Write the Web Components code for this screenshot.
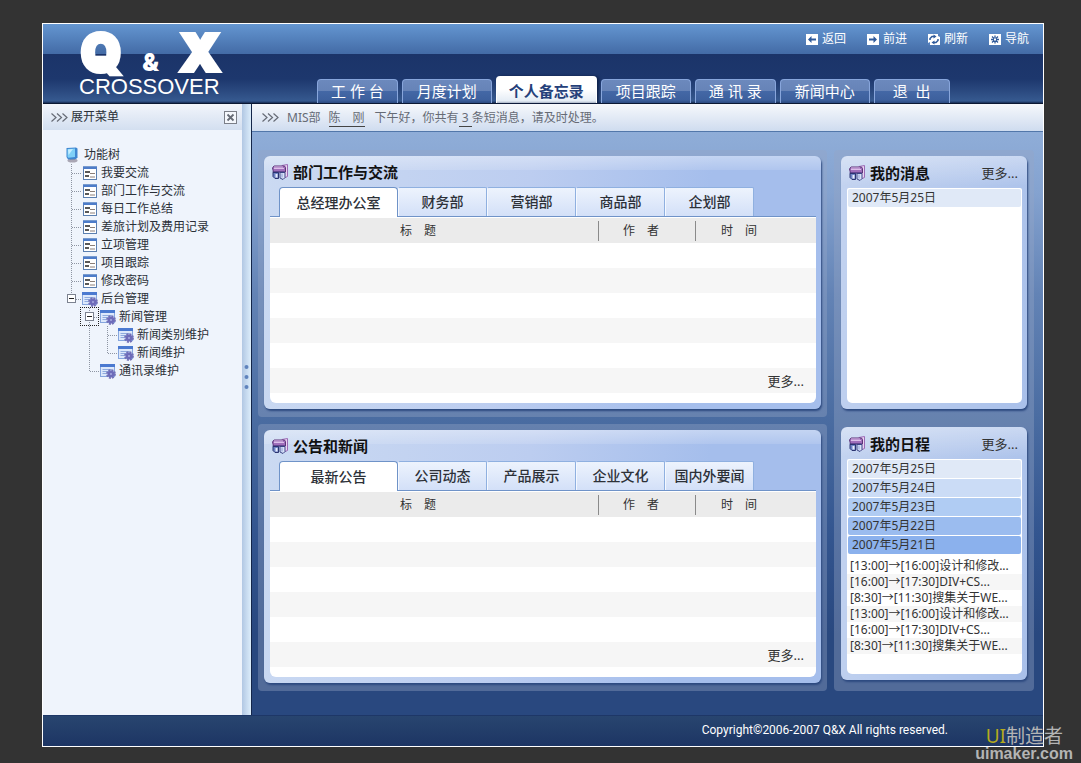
<!DOCTYPE html>
<html lang="zh-CN">
<head>
<meta charset="utf-8">
<meta name="viewport" content="width=device-width, initial-scale=1">
<title>Q&amp;X Crossover</title>
<style>
  html { background: #333; }
  body {
    margin: 0; padding: 23px 37px 16px 42px;
    font: 12px/18px "Noto Sans", "Noto Sans CJK SC", sans-serif;
    color: #333;
  }
</style>
</head>
<body>
<qx-app>
  <qx-header slot="header">
    <qx-logo slot="logo"></qx-logo>
    <qx-tool slot="tools" icon="back">返回</qx-tool>
    <qx-tool slot="tools" icon="forward">前进</qx-tool>
    <qx-tool slot="tools" icon="refresh">刷新</qx-tool>
    <qx-tool slot="tools" icon="guide">导航</qx-tool>
    <qx-nav-tab spaced>工 作 台</qx-nav-tab>
    <qx-nav-tab>月度计划</qx-nav-tab>
    <qx-nav-tab active>个人备忘录</qx-nav-tab>
    <qx-nav-tab>项目跟踪</qx-nav-tab>
    <qx-nav-tab spaced>通 讯 录</qx-nav-tab>
    <qx-nav-tab>新闻中心</qx-nav-tab>
    <qx-nav-tab spaced>退&nbsp; 出</qx-nav-tab>
  </qx-header>

  <qx-sidebar slot="sidebar" heading="展开菜单">
    <qx-tree-item root icon="computer" label="功能树">
      <qx-tree-item icon="page" label="我要交流"></qx-tree-item>
      <qx-tree-item icon="page" label="部门工作与交流"></qx-tree-item>
      <qx-tree-item icon="page" label="每日工作总结"></qx-tree-item>
      <qx-tree-item icon="page" label="差旅计划及费用记录"></qx-tree-item>
      <qx-tree-item icon="page" label="立项管理"></qx-tree-item>
      <qx-tree-item icon="page" label="项目跟踪"></qx-tree-item>
      <qx-tree-item icon="page" label="修改密码"></qx-tree-item>
      <qx-tree-item icon="gear" label="后台管理" last open>
        <qx-tree-item icon="gear" label="新闻管理" open focused>
          <qx-tree-item icon="gear" label="新闻类别维护"></qx-tree-item>
          <qx-tree-item icon="gear" label="新闻维护" last></qx-tree-item>
        </qx-tree-item>
        <qx-tree-item icon="gear" label="通讯录维护" last></qx-tree-item>
      </qx-tree-item>
    </qx-tree-item>
  </qx-sidebar>

  <qx-greeting slot="greeting"></qx-greeting>

  <qx-backing>
    <qx-panel heading="部门工作与交流">
      <qx-tabs>
        <qx-tab active>总经理办公室</qx-tab>
        <qx-tab>财务部</qx-tab>
        <qx-tab>营销部</qx-tab>
        <qx-tab>商品部</qx-tab>
        <qx-tab>企划部</qx-tab>
      </qx-tabs>
      <qx-table></qx-table>
    </qx-panel>
  </qx-backing>
  <qx-backing>
    <qx-panel heading="公告和新闻">
      <qx-tabs>
        <qx-tab active>最新公告</qx-tab>
        <qx-tab>公司动态</qx-tab>
        <qx-tab>产品展示</qx-tab>
        <qx-tab>企业文化</qx-tab>
        <qx-tab>国内外要闻</qx-tab>
      </qx-tabs>
      <qx-table></qx-table>
    </qx-panel>
  </qx-backing>

  <qx-backing slot="aside" side>
    <qx-panel heading="我的消息" more side>
      <qx-day level="1">2007年5月25日</qx-day>
    </qx-panel>
    <qx-panel heading="我的日程" more side>
      <qx-day level="1">2007年5月25日</qx-day>
      <qx-day level="2">2007年5月24日</qx-day>
      <qx-day level="3">2007年5月23日</qx-day>
      <qx-day level="4">2007年5月22日</qx-day>
      <qx-day level="5">2007年5月21日</qx-day>
      <qx-events></qx-events>
    </qx-panel>
  </qx-backing>

  <qx-footer slot="footer">Copyright©2006-2007 Q&amp;X All rights reserved.</qx-footer>
</qx-app>
<qx-watermark></qx-watermark>

<script>
const base = '<style>:host,*,::before,::after{box-sizing:border-box}button{font:inherit;color:inherit;padding:0;margin:0;border:0;background:none}a{color:inherit;text-decoration:none}svg{display:block;flex:none}</style>';

function define(name, render) {
  customElements.define(name, class extends HTMLElement {
    constructor() {
      super();
      this.attachShadow({ mode: 'open' });
    }
    connectedCallback() {
      this.shadowRoot.innerHTML = base + render(this);
    }
  });
}

const chevrons = '<svg width="17" height="9" viewBox="0 0 17 9" fill="none" stroke="#666b75" stroke-width="1.2"><path d="M.5.5l4.500 4-4.500 4M6 .5l4.500 4-4.500 4M11.500.5l4.500 4-4.500 4"/></svg>';

const panelIcon = `<svg width="16" height="16" viewBox="0 0 16 16">
  <path d="M10 3V1.500L15.500.5v12L12 14z" fill="#ecd3f2" stroke="#9a6ab5"/>
  <path d="M.5 4L2 2h10.500l1 1.500v4.500L1.500 8z" fill="#a06fbb" stroke="#5c3578"/>
  <path d="M2 4.500h10M2 3h9" stroke="#dcbfe9"/>
  <path d="M.5 7.500h12v1h-12z" fill="#4a3f88"/>
  <path d="M1 8.500h5.500v6H3L1 12.500z" fill="#6f84c6" stroke="#2b3470"/>
  <path d="M3.500 10h2v3.500h-2z" fill="#e8edfb"/>
  <path d="M8 8.500h5v5l-2 2-3-1.500z" fill="#d9e2f8" stroke="#3b4585"/>
  <path d="M10 9.500v4" stroke="#8d9ed6"/></svg>`;

const toolIcons = {
  back: '<path d="M2 5.500L5.500 2v2.500H10v2H5.500V9z" fill="#2f5a9b"/>',
  forward: '<path d="M10 5.500L6.500 2v2.500H2v2h4.500V9z" fill="#2f5a9b"/>',
  refresh: '<path d="M2 6V4.500L4 2.500h2.500M10 5v1.500L8 8.500H5.500" fill="none" stroke="#2f5a9b" stroke-width="1.500"/><path d="M5.500.5l3 2-3 2zM6.500 6.500l-3 2 3 2z" fill="#2f5a9b"/><path d="M0 9l2-1v3H0zM12 0v3l-2-1V0z" fill="#5580bd"/>',
  guide: '<path d="M6 1.500v8M2 5.500h8M3 2.500l6 6M9 2.500l-6 6" stroke="#2f5a9b" stroke-width="1.300"/><rect x="5" y="4.500" width="2" height="2" fill="#fff"/>'
};

const treeIcons = {
  computer: `<svg width="14" height="16" viewBox="0 0 14 16">
    <ellipse cx="7.500" cy="13.500" rx="5" ry="2" fill="#a9a6b4"/><path d="M5 10h5v3H5z" fill="#8d93a8"/>
    <path d="M1.500 1L11 .5l1.500 1v9L11 12 3 12.500 1.500 10z" fill="#3f86d0"/><path d="M2.500 2l7.500-.5V10l-6.500.8L2.500 10z" fill="#7fd0f7"/>
    <path d="M3 2.500l5-.5-4.500 6z" fill="#c6efff"/></svg>`,
  page: `<svg width="16" height="16" viewBox="0 0 16 16">
    <rect x="1.500" y="2" width="13" height="12.500" fill="#fff" stroke="#5b7fb0"/><path d="M1 1.500h14v2.500H1z" fill="#4d7cc9"/>
    <path d="M3 7h5M3 11h4" stroke="#222" stroke-width="1.400"/><path d="M8 8.500h5M8 12h5" stroke="#8b7f78"/></svg>`,
  gear: `<svg width="16" height="16" viewBox="0 0 16 16">
    <rect x=".5" y="1.500" width="14" height="12" fill="#dce8fb" stroke="#86a6de"/><path d="M0 1h15v3H0z" fill="#4a79d0"/>
    <path d="M2.500 6.500h9M2.500 8.500h7M2.500 10.500h4" stroke="#8fabde"/>
    <circle cx="11" cy="11" r="4" fill="none" stroke="#7472b8" stroke-width="1.800" stroke-dasharray="2 1.140"/>
    <circle cx="11" cy="11" r="3.400" fill="#6e6cba"/><circle cx="11" cy="11" r="1" fill="#a9abe0"/></svg>`
};

define('qx-app', () => `<style>
  :host{display:block;border:1px solid #fff;background:#27467f}
  .body{display:flex;align-items:stretch}
  main{flex:1;min-width:0;border-left:1px solid #14264a;
    background:linear-gradient(#8fadd8 28px,#84a2cf 90px,#6383b5 190px,#4b6da2 310px,#33558f 430px,#29487f 530px)}
  .grid{display:grid;grid-template-columns:minmax(0,1fr) 200px;gap:7px;padding:18px 9px 24px 6px}
  .left{display:grid;gap:7px}
  .aside{display:grid}
  </style>
  <slot name="header"></slot>
  <div class="body"><slot name="sidebar"></slot>
    <main><slot name="greeting"></slot><div class="grid"><div class="left"><slot></slot></div><div class="aside"><slot name="aside"></slot></div></div></main>
  </div>
  <slot name="footer"></slot>`);

define('qx-header', () => `<style>
  :host{display:flex;height:80px;border-bottom:1px solid #0b1833;
    background:linear-gradient(#6496d1,#436ba6 30px,#1b3469 30px,#1d376d 55px,#36598f 77px,#172b52 79px)}
  .brand{width:274px;padding:7px 0 0 36px}
  .right{flex:1;display:flex;flex-direction:column;justify-content:space-between}
  .tools{display:flex;justify-content:flex-end;gap:21px;padding:6px 14px 0 0}
  nav{display:flex;align-items:flex-end;gap:4px}
  </style>
  <div class="brand"><slot name="logo"></slot></div>
  <div class="right"><div class="tools"><slot name="tools"></slot></div><nav><slot></slot></nav></div>`);

define('qx-logo', () => `<style>
  :host{display:block;width:144px;color:#fff}
  .mark{display:flex;justify-content:space-between;align-items:baseline;height:44px;padding:0 3px 0 2px;font:900 51px/44px Inter,sans-serif;-webkit-text-stroke:4px #fff}
  .amp{font-size:24px;-webkit-text-stroke:0}
  .word{font:22px/24px "Liberation Sans",sans-serif}
  </style>
  <div class="mark"><span>Q</span><span class="amp">&amp;</span><span>X</span></div>
  <div class="word">CROSSOVER</div>`);

define('qx-tool', el => `<style>
  :host{display:block;color:#fff}
  a{display:flex;align-items:center;gap:4px}
  </style>
  <a href="#"><svg width="12" height="11" viewBox="0 0 12 11"><rect width="12" height="11" fill="#fff"/>${toolIcons[el.getAttribute('icon')]}</svg><slot></slot></a>`);

define('qx-nav-tab', () => `<style>
  :host{display:block}
  a{display:block;height:24px;min-width:76px;padding:0 14px;text-align:center;white-space:nowrap;
    font-size:15px;line-height:22px;color:#fff;border:1px solid #88a6dc;border-bottom:0;border-radius:4px 4px 0 0;
    background:linear-gradient(#6c89bd,#6683b7 11px,#4468a6 11px,#3d609d 20px,#2b4a80)}
  :host([spaced]) a{padding:0 13px}
  :host([active]) a{height:27px;padding:0 12px;line-height:28px;font-weight:bold;color:#24407a;border-color:#fff;
    background:linear-gradient(#fff 12px,#e4ecf5 24px,#a5b0c2);box-shadow:2px 0 3px #0f2148}
  </style><a href="#"><slot></slot></a>`);

define('qx-sidebar', el => `<style>
  :host{display:flex;width:208px;background:#eff4fc;color:#2b3038}
  .col{flex:1}
  header{display:flex;align-items:center;gap:3px;height:26px;padding:0 5px 0 8px;
    background:linear-gradient(#f2f5fb,#d3dff0)}
  h2{flex:1;margin:0;font:inherit}
  button{display:block}
  .tree{padding:16px 0 0 22px}
  .split{width:9px;padding:260px 0 0 2px;background:linear-gradient(90deg,#b1c7e3,#dcedfb)}
  </style>
  <div class="col"><header>${chevrons}<h2>${el.getAttribute('heading')}</h2>
    <button type="button" aria-label="关闭"><svg width="13" height="13" viewBox="0 0 13 13"><rect x=".5" y=".5" width="12" height="12" fill="#f4f7fc" stroke="#7b7f88"/><path d="M3.500 3.500l6 6M9.500 3.500l-6 6" stroke="#666b75" stroke-width="1.800"/></svg></button></header>
    <div class="tree"><slot></slot></div></div>
  <div class="split"><svg width="5" height="25" viewBox="0 0 5 25" fill="#5f83bd"><circle cx="2.500" cy="3" r="2"/><circle cx="2.500" cy="13" r="2"/><circle cx="2.500" cy="23" r="2"/></svg></div>`);

define('qx-tree-item', el => {
  const root = el.hasAttribute('root');
  const toggle = el.hasAttribute('open')
    ? `<button type="button" aria-expanded="true" aria-label="折叠"><svg width="9" height="9" viewBox="0 0 9 9"><rect x=".5" y=".5" width="8" height="8" fill="#fff" stroke="#7c8290"/><path d="M2 4.500h5" stroke="#222"/></svg></button>` : '';
  return `<style>
  :host{display:block;white-space:nowrap;
    background:repeating-linear-gradient(#8e95a3 0 1px,transparent 1px 2px) 5px 0/1px 100% no-repeat}
  :host([last]){background-size:1px 9px}
  :host([root]){background:none}
  .row{display:flex;align-items:center;height:18px}
  .join{flex:none;width:16px;height:18px;padding:4px 0 0 1px;
    background:repeating-linear-gradient(90deg,#8e95a3 0 1px,transparent 1px 2px) 6px 9px/10px 1px no-repeat}
  button{display:block;width:9px;height:9px}
  :host([focused]) button{outline:1px dotted #222;outline-offset:4px}
  a{display:flex;align-items:center;gap:3px}
  :host([root]) a{gap:5px}
  .kids{padding-left:18px}
  :host([root]) .kids{padding-left:1px}
  </style>
  <div class="row">${root ? '' : `<span class="join">${toggle}</span>`}<a href="#">${treeIcons[el.getAttribute('icon')]}<span>${el.getAttribute('label')}</span></a></div>
  <div class="kids"><slot></slot></div>`;
});

define('qx-greeting', () => `<style>
  :host{display:flex;align-items:center;gap:8px;height:28px;padding:0 10px;color:#666b75;white-space:pre;
    border-bottom:1px solid #5277aa;background:linear-gradient(#f6f8fc,#cfdcef)}
  a{border-bottom:1px solid #444}
  p{margin:0;line-height:16px}
  .who{margin-right:2px}
  </style>${chevrons}<p>MIS部</p><p class="who"><a href="#">陈&emsp;刚</a></p><p>下午好，你共有<a href="#"> 3 </a>条短消息，请及时处理。</p>`);

define('qx-backing', () => `<style>
  :host{display:block;padding:6px 6px 8px;border-radius:4px;background:rgba(150,165,196,.38)}
  :host([side]){display:grid;grid-template-rows:253px 253px;align-content:start;gap:18px;padding:6px 7px}
  </style><slot></slot>`);

define('qx-panel', el => `<style>
  :host{display:flex;flex-direction:column;border-radius:6px;padding:0 5px 6px 6px;box-shadow:1px 2px 2px #2d4a80;
    background:linear-gradient(rgba(255,255,255,.35),rgba(255,255,255,.12) 14px,transparent 14px),
      linear-gradient(100deg,#cbdaf2,#bccdf0 45%,#a5beec 75%)}
  :host([side]){background:linear-gradient(rgba(255,255,255,.35),transparent 30px),linear-gradient(100deg,#c3d3f0,#a9c0ea)}
  header{display:flex;align-items:center;gap:5px;height:31px;padding:1px 4px 0 2px}
  :host([side]) header{height:32px;padding-top:2px}
  header a{font-size:13px}
  h2{flex:1;margin:0;color:#111;font-size:15px;font-weight:bold;line-height:20px}
  .inner{flex:1}
  :host([side]) .inner{background:#fff;border-radius:2px 2px 5px 5px;padding-top:1px}
  </style>
  <header>${panelIcon}<h2>${el.getAttribute('heading')}</h2>${el.hasAttribute('more') ? '<a href="#">更多...</a>' : ''}</header>
  <div class="inner"><slot></slot></div>`);

define('qx-tabs', () => `<style>
  :host{display:flex;height:30px;padding-left:9px;background:linear-gradient(#6f93c8,#6f93c8) 0 29px/100% 1px no-repeat}
  </style><slot></slot>`);

define('qx-tab', () => `<style>
  :host{display:block;width:89px}
  :host([active]){width:119px}
  button{display:block;width:100%;height:29px;font-size:14px;font-weight:500;color:#2d3138;white-space:nowrap;
    border:1px solid #8fb0e0;border-left-color:#f4f8ff;border-bottom:0;border-radius:2px 2px 0 0;
    background:linear-gradient(#edf3fd,#d3e0f8)}
  :host([active]) button{height:30px;border-color:#6f93c8;border-radius:4px 4px 0 0;background:#fff}
  </style><button type="button"><slot></slot></button>`);

define('qx-table', () => `<style>
  :host{display:block;background:#fff;border-radius:0 0 6px 6px;padding:1px 0 10px}
  table{width:100%;border-collapse:collapse;table-layout:fixed}
  th{height:25px;padding:0;font-weight:normal;background:#ebebeb}
  th span{display:block;line-height:20px}
  th+th span{border-left:1px solid #8a8a8a}
  .title{padding-right:32px}
  .author{width:97px}.time{width:121px}
  .author span{padding-right:12px}.time span{padding-right:34px}
  td{height:25px;padding:0 12px;font-size:13px;text-align:right}
  tbody tr:nth-child(even){background:#f6f6f6}
  </style>
  <table><thead><tr><th class="title"><span>标　题</span></th><th class="author"><span>作　者</span></th><th class="time"><span>时　间</span></th></tr></thead>
  <tbody>${'<tr><td colspan="3"></td></tr>'.repeat(5)}<tr><td colspan="3"><a href="#">更多...</a></td></tr></tbody></table>`);

define('qx-day', () => `<style>
  :host{display:block;margin:0 1px 1px;border-radius:2px;line-height:18px;background:#e0e9f7}
  :host([level="2"]){background:#cbdcf6}
  :host([level="3"]){background:#b0ccf3}
  :host([level="4"]){background:#9bbcef}
  :host([level="5"]){background:#8bb1ed}
  a{display:block;padding-left:4px}
  </style><a href="#"><slot></slot></a>`);

define('qx-events', () => `<style>
  :host{display:block}
  ul{list-style:none;margin:0;padding:3px 0 0}
  li{height:16px;padding-left:3px;line-height:16px;white-space:nowrap}
  li:nth-child(even){background:#f6f6f6}
  </style><ul>${['[13:00]→[16:00]设计和修改...', '[16:00]→[17:30]DIV+CS...', '[8:30]→[11:30]搜集关于WE...',
    '[13:00]→[16:00]设计和修改...', '[16:00]→[17:30]DIV+CS...', '[8:30]→[11:30]搜集关于WE...']
    .map(t => `<li><a href="#">${t}</a></li>`).join('')}</ul>`);

define('qx-footer', () => `<style>
  :host{display:block;height:31px;padding:0 95px 0 0;text-align:right;color:#fff;line-height:28px;
    font-family:Roboto,sans-serif;border-top:1px solid #1e3767;background:linear-gradient(#28456f,#1d3564)}
  </style><slot></slot>`);

define('qx-watermark', () => `<style>
  :host{position:absolute;right:8px;top:726px;text-align:right;color:#b4b4b4}
  .top{padding-right:10px;font-size:19px;line-height:20px}
  .ui{color:#b5aa1c}
  .site{font:bold 16px/16px "Liberation Sans",sans-serif}
  </style><div class="top"><span class="ui">UI</span>制造者</div><div class="site">uimaker.com</div>`);
</script>
</body>
</html>
